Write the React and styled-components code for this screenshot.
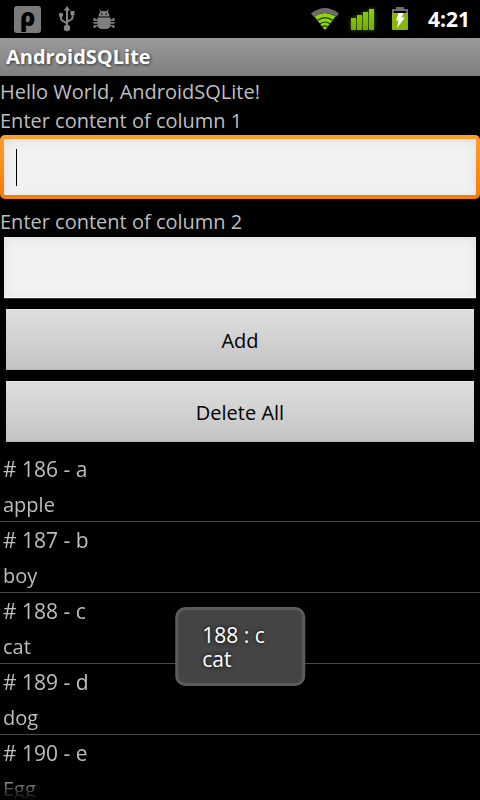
import React, { useState } from "react"
import styled, { createGlobalStyle } from "styled-components"

const GlobalStyle = createGlobalStyle`
  * {
    box-sizing: border-box;
  }

  body {
    margin: 0;
    background: #000;
    color: #bebebe;
    font-family: "Open Sans", "Noto Sans", sans-serif;
    font-size: 20px;
    line-height: 29px;
  }
`

const Screen = styled.div`
  position: relative;
  display: flex;
  flex-direction: column;
  height: 100vh;
  overflow: hidden;
`

const StatusBar = styled.header`
  display: flex;
  flex: none;
  align-items: center;
  justify-content: space-between;
  height: 38px;
  padding: 0 10px 0 14px;
`

const IconGroup = styled.div`
  display: flex;
  align-items: center;
  gap: ${props => props.$gap}px;
`

const AppBadge = styled.span`
  width: 27px;
  height: 27px;
  border-radius: 3px;
  background: #7b7b7b;
  color: #000;
  font-size: 24px;
  font-weight: 800;
  line-height: 22px;
  text-align: center;
`

const Clock = styled.time`
  margin-left: 9px;
  color: #fff;
  font-size: 21px;
  font-weight: 700;
`

const TitleBar = styled.h1`
  flex: none;
  height: 38px;
  margin: 0;
  padding: 0 6px;
  background: linear-gradient(#9a9a9a, #7f7f7f);
  color: #fff;
  font-size: 20px;
  font-weight: 700;
  line-height: 37px;
  text-shadow: 1px 1px 3px #333;
`

const Form = styled.form`
  display: flex;
  flex: none;
  flex-direction: column;
`

const Text = styled.p`
  margin: 0;
  padding-top: 2px;
  line-height: 27px;
`

const Field = styled.input`
  display: block;
  width: calc(100% - 8px);
  height: 61px;
  margin: 2px 4px 9px;
  padding: 0 12px;
  border: 0;
  border-bottom: 1px solid #fff;
  outline: 0;
  background: #f1f1f1;
  box-shadow: inset 0 2px 8px #dedede, 0 1px 0 #333;
  color: #000;
  font: inherit;

  &:focus {
    width: 100%;
    height: 64px;
    margin: 1px 0 7px;
    border: 4px solid transparent;
    border-radius: 5px;
    background: linear-gradient(#f1f1f1, #f1f1f1) padding-box,
      linear-gradient(#ff9e2c, #f57c05) border-box;
    box-shadow: inset 0 2px 8px #dedede;
  }

  /* tall insertion mark of an empty field */
  &:focus:placeholder-shown {
    background: linear-gradient(#000, #000) 12px center / 1px 37px no-repeat
        padding-box,
      linear-gradient(#f1f1f1, #f1f1f1) padding-box,
      linear-gradient(#ff9e2c, #f57c05) border-box;
    caret-color: transparent;
  }
`

const Button = styled.button`
  height: 61px;
  margin: 2px 6px 9px;
  padding: 2px 0 0;
  border: 0;
  border-radius: 1px;
  background: linear-gradient(#dfdfdf, #c3c3c3);
  box-shadow: inset 0 1px 0 #e8e8e8, inset 0 -1px 0 #b4b4b4;
  color: #000;
  font: inherit;
`

const List = styled.ul`
  flex: 1;
  min-height: 0;
  margin: 0;
  padding: 0;
  overflow: hidden;
  list-style: none;
  mask-image: linear-gradient(#000 calc(100% - 24px), transparent);
`

const Row = styled.li`
  padding: 4px 3px 0;
  border-bottom: 1px solid #484848;
`

const RowTitle = styled.div`
  height: 35px;
  font-size: 21px;
`

const RowValue = styled.div`
  height: 31px;
`

const Toast = styled.output`
  position: absolute;
  bottom: 114px;
  left: 50%;
  padding: 13px 37px 12px 24px;
  transform: translateX(-50%);
  border: 3px solid #5c5c5c;
  border-radius: 10px;
  background: rgba(72, 72, 72, 0.95);
  color: #fff;
  font-size: 21px;
  line-height: 24px;
  text-shadow: 0 0 4px #000;
  white-space: pre;
`

const SignalBars = styled.svg`
  overflow: visible;
  filter: drop-shadow(0 0 2px #3c7000);
`

const rows = [
  { id: 186, key: "a", value: "apple" },
  { id: 187, key: "b", value: "boy" },
  { id: 188, key: "c", value: "cat" },
  { id: 189, key: "d", value: "dog" },
  { id: 190, key: "e", value: "Egg" },
]

function UsbIcon() {
  return (
    <svg width="18" height="26" viewBox="0 0 18 26" aria-label="USB connected">
      <g fill="none" stroke="#858585" strokeWidth="2">
        <path d="M9 4v18M3 9v3.500q0 1.500 1.500 2.200L9 17.500M14.500 7v4.500q0 1.500-1.500 2.200L9 16" />
      </g>
      <g fill="#858585">
        <path d="M9 0l3.200 4.500H5.800z" />
        <circle cx="3" cy="9" r="2.200" />
        <path d="M12.500 5h4v4h-4z" />
        <circle cx="9" cy="22" r="3.200" />
      </g>
    </svg>
  )
}

function DebugIcon() {
  return (
    <svg width="22" height="21" viewBox="0 0 22 21" aria-label="USB debugging">
      <path
        d="M8 3L6.800.8M14 3L15.200.8"
        fill="none"
        stroke="#808080"
        strokeWidth="1.200"
      />
      <g fill="#808080">
        <path d="M5.500 7.500q0-5.500 5.500-5.500t5.500 5.500z" />
        <path d="M4.300 8.500h13.400v6.500q0 5-5 5H9.300q-5 0-5-5z" />
        <path d="M.5 9h2v1.500h2V12h-4zM.5 13h4v1.800h-4zM.5 16h4v1.500h-2V19h-2z" />
        <path d="M21.500 9h-2v1.500h-2V12h4zM21.500 13h-4v1.800h4zM21.500 16h-4v1.500h2V19h2z" />
      </g>
      <circle cx="8.700" cy="5" r="0.800" />
      <circle cx="13.300" cy="5" r="0.800" />
    </svg>
  )
}

function WifiIcon() {
  return (
    <svg width="30" height="24" viewBox="0 0 30 24" aria-label="Wi-Fi">
      <path d="M1 6.500Q15-4.500 29 6.500L26 10Q15 2 4 10z" fill="#6b6b6b" />
      <path d="M4.500 9.500Q15 2.500 25.500 9.500L16 22q-1 1.500-2 0z" fill="#8bd603" />
      <g fill="none" stroke="#1d3800" strokeWidth="1.200">
        <path d="M7.500 13.300q7.500-5.500 15 0" />
        <path d="M10.200 16.800q4.800-3.600 9.600 0" />
        <path d="M12.500 19.800q2.500-1.900 5 0" />
      </g>
    </svg>
  )
}

function SignalIcon() {
  return (
    <SignalBars width="31" height="24" viewBox="0 0 31 24" aria-label="Signal">
      <defs>
        <linearGradient id="signal" x2="0" y2="1">
          <stop stopColor="#8ad010" />
          <stop offset="1" stopColor="#79ab00" />
        </linearGradient>
      </defs>
      <path
        d="M1 11h5v12H1zM7 8h5v15H7zM13 5h5v18h-5zM19 2h5v21h-5z"
        fill="url(#signal)"
      />
    </SignalBars>
  )
}

function BatteryIcon() {
  return (
    <svg width="18" height="24" viewBox="0 0 18 24" aria-label="Charging">
      <path d="M5 0h8v2h4v5H1V2h4z" fill="#6e6e6e" />
      <path d="M3 4h12v3H3z" fill="#000" />
      <path d="M1 6h16v16q0 1-1 1H2q-1 0-1-1z" fill="#86b804" />
      <path d="M7.500 6h5L10.800 10.500H14L6 21l1.500-7.500H5z" fill="#fff" />
    </svg>
  )
}

export default function App() {
  const [first, setFirst] = useState("")
  const [second, setSecond] = useState("")

  return (
    <>
      <GlobalStyle />
      <Screen>
        <StatusBar>
          <IconGroup $gap={17}>
            <AppBadge>ρ</AppBadge>
            <UsbIcon />
            <DebugIcon />
          </IconGroup>
          <IconGroup $gap={10}>
            <WifiIcon />
            <SignalIcon />
            <BatteryIcon />
            <Clock>4:21</Clock>
          </IconGroup>
        </StatusBar>
        <TitleBar>AndroidSQLite</TitleBar>
        <Form onSubmit={e => e.preventDefault()}>
          <Text>Hello World, AndroidSQLite!</Text>
          <Text as="label" htmlFor="column1">
            Enter content of column 1
          </Text>
          <Field
            id="column1"
            placeholder=" "
            autoComplete="off"
            autoFocus
            value={first}
            onChange={e => setFirst(e.target.value)}
          />
          <Text as="label" htmlFor="column2">
            Enter content of column 2
          </Text>
          <Field
            id="column2"
            placeholder=" "
            autoComplete="off"
            value={second}
            onChange={e => setSecond(e.target.value)}
          />
          <Button type="submit">Add</Button>
          <Button type="button">Delete All</Button>
        </Form>
        <List>
          {rows.map(row => (
            <Row key={row.id}>
              <RowTitle>
                # {row.id} - {row.key}
              </RowTitle>
              <RowValue>{row.value}</RowValue>
            </Row>
          ))}
        </List>
        <Toast>{"188 : c\ncat"}</Toast>
      </Screen>
    </>
  )
}
